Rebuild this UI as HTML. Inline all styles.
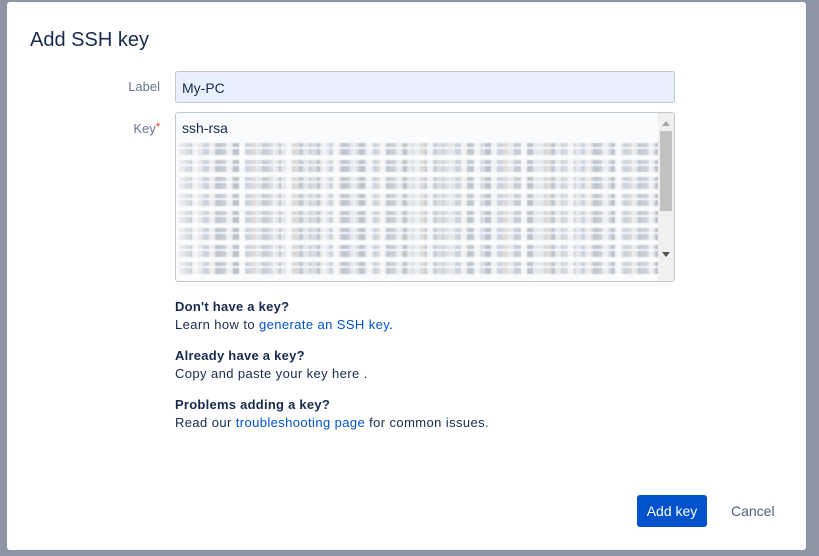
<!DOCTYPE html>
<html><head><meta charset="utf-8"><style>
*{margin:0;padding:0;box-sizing:border-box}
body{width:819px;height:556px;background:#8e96a6;position:relative;overflow:hidden;font-family:"Liberation Sans",sans-serif;color:#172b4d}
.dlg{position:absolute;left:7px;top:2px;width:799px;height:548px;background:#fff;border-radius:3px}
h1{position:absolute;left:23px;top:27px;font-size:20px;font-weight:normal;color:#172b4d}
.lbl{position:absolute;font-size:13px;color:#6b778c;text-align:right;width:60px}
.inp{position:absolute;left:168px;top:69px;width:500px;height:32px;background:#e8f0fe;border:1px solid #c1c7d0;border-radius:3px;font-size:14px;padding:8px 6px}
.ta{position:absolute;left:168px;top:110px;width:500px;height:170px;background:#fafbfc;border:1px solid #c1c7d0;border-radius:3px;overflow:hidden}
.ta .t{position:absolute;left:6px;top:7px;font-size:14px}
.noise{position:absolute;left:3px;top:30px;width:482px;height:135px;
background:
repeating-linear-gradient(90deg,rgba(255,255,255,.6) 0 6px,transparent 6px 13px,rgba(255,255,255,.8) 13px 19px,transparent 19px 30px,rgba(255,255,255,.5) 30px 36px,transparent 36px 47px),
repeating-linear-gradient(180deg,transparent 0 4px,#f5f6f8 4px 6px,transparent 6px 12px,#fafbfc 12px 17px),
repeating-linear-gradient(90deg,#b9bfca 0 6px,#cdd2da 6px 12px,#a9b0bc 12px 18px,#dde0e6 18px 24px,#bcc6d4 24px 30px,#d7cfcf 30px 36px,#aab5c2 36px 42px);
opacity:.75;filter:blur(.6px)}
.sb{position:absolute;right:0;top:0;width:16px;height:100%;background:#f0f0f0}
.sb .th{position:absolute;left:2px;top:18px;width:12px;height:80px;background:#c1c1c1}
.up,.dn{position:absolute;left:4px;width:0;height:0;border-left:4px solid transparent;border-right:4px solid transparent}
.up{top:8px;border-bottom:5px solid #a3a3a3}
.dn{top:139px;border-top:5px solid #505050}
.help{position:absolute;left:168px;font-size:13px;line-height:18px;letter-spacing:.4px}
.help b{display:block;letter-spacing:.25px}
a{color:#0052cc;text-decoration:none}
.btn{position:absolute;left:630px;top:493px;width:70px;height:32px;background:#0052cc;color:#fff;border-radius:3px;font-size:14px;text-align:center;line-height:32px}
.cancel{position:absolute;left:724px;top:501px;font-size:14px;color:#505f79}
</style></head><body>
<div class="dlg">
<h1>Add SSH key</h1>
<div class="lbl" style="left:93px;top:77px">Label</div>
<div class="inp">My-PC</div>
<div class="lbl" style="left:93px;top:119px">Key<span style="color:#de350b;font-size:11px;vertical-align:top">*</span></div>
<div class="ta"><div class="t">ssh-rsa</div><div class="noise"></div>
<div class="sb"><div class="up"></div><div class="th"></div><div class="dn"></div></div></div>
<div class="help" style="top:296px"><b>Don't have a key?</b>Learn how to <a>generate an SSH key</a>.</div>
<div class="help" style="top:345px"><b>Already have a key?</b>Copy and paste your key here .</div>
<div class="help" style="top:394px"><b>Problems adding a key?</b>Read our <a>troubleshooting page</a> for common issues.</div>
<div class="btn">Add key</div>
<div class="cancel">Cancel</div>
</div>
</body></html>
